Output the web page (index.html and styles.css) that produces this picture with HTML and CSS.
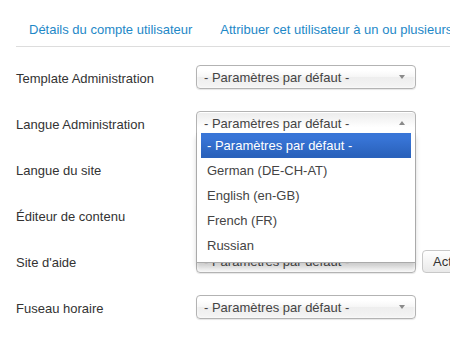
FILE: index.html
```html
<!DOCTYPE html>
<html lang="fr">
<head>
<meta charset="utf-8">
<title>Utilisateur</title>
<link rel="stylesheet" href="styles.css">
</head>
<body>
<div class="page">
  <ul class="tabs">
    <li><a href="#">Détails du compte utilisateur</a></li>
    <li><a href="#">Attribuer cet utilisateur à un ou plusieurs groupes</a></li>
  </ul>
  <form class="form">
    <div class="row">
      <label class="label">Template Administration</label>
      <div class="controls">
        <div class="select"><span class="value">- Paramètres par défaut -</span><b class="arrow"></b></div>
      </div>
    </div>
    <div class="row row-open">
      <label class="label">Langue Administration</label>
      <div class="controls">
        <div class="select open"><span class="value">- Paramètres par défaut -</span><b class="arrow up"></b>
          <div class="drop">
            <ul class="results">
              <li class="hl">- Paramètres par défaut -</li>
              <li>German (DE-CH-AT)</li>
              <li>English (en-GB)</li>
              <li>French (FR)</li>
              <li>Russian</li>
            </ul>
          </div>
        </div>
      </div>
    </div>
    <div class="row">
      <label class="label">Langue du site</label>
      <div class="controls">
        <div class="select"><span class="value">- Paramètres par défaut -</span><b class="arrow"></b></div>
      </div>
    </div>
    <div class="row">
      <label class="label">Éditeur de contenu</label>
      <div class="controls">
        <div class="select"><span class="value">- Paramètres par défaut -</span><b class="arrow"></b></div>
      </div>
    </div>
    <div class="row">
      <label class="label">Site d'aide</label>
      <div class="controls">
        <div class="select"><span class="value">- Paramètres par défaut -</span><b class="arrow"></b></div>
        <button type="button" class="btn">Actualiser</button>
      </div>
    </div>
    <div class="row">
      <label class="label">Fuseau horaire</label>
      <div class="controls">
        <div class="select"><span class="value">- Paramètres par défaut -</span><b class="arrow"></b></div>
      </div>
    </div>
  </form>
</div>
</body>
</html>
```

FILE: styles.css
```css
html, body {
  margin: 0;
  padding: 0;
  background: #fff;
}
body {
  width: 450px;
  height: 350px;
  overflow: hidden;
  font-family: "Liberation Sans", Arial, sans-serif;
  font-size: 13px;
  color: #333;
}
.page {
  padding: 11px 0 0 16px;
  width: 700px;
}
.tabs {
  list-style: none;
  margin: 0;
  padding: 0;
  display: flex;
  border-bottom: 1px solid #dddddd;
  white-space: nowrap;
}
.tabs li {
  margin-right: 2px;
}
.tabs a {
  display: block;
  padding: 9px 13px 6px;
  line-height: 20px;
  color: #1e88c7;
  text-decoration: none;
}
.form {
  margin-top: 18px;
}
.row {
  display: flex;
  height: 24px;
  margin-bottom: 22px;
  white-space: nowrap;
}
.label {
  width: 180px;
  flex: none;
  padding-top: 5px;
  line-height: 18px;
  color: #333;
}
.controls {
  display: flex;
  align-items: flex-start;
}
.select {
  position: relative;
  box-sizing: border-box;
  width: 220px;
  height: 24px;
  padding-left: 7px;
  border: 1px solid #b3b3b3;
  border-radius: 4px;
  background: linear-gradient(#ffffff 20%, #f6f6f6 50%, #eeeeee 52%, #f4f4f4 100%);
  box-shadow: 0 0 3px #fff inset, 0 1px 1px rgba(0, 0, 0, 0.1);
  color: #444;
  line-height: 23px;
}
.select .value {
  display: block;
  overflow: hidden;
}
.arrow {
  position: absolute;
  right: 10px;
  top: 9px;
  width: 0;
  height: 0;
  border-left: 3px solid transparent;
  border-right: 3px solid transparent;
  border-top: 4px solid #8a8a8a;
}
.arrow.up {
  border-top: 0;
  border-bottom: 4px solid #8a8a8a;
}
.select.open {
  border-bottom-left-radius: 0;
  border-bottom-right-radius: 0;
  background: linear-gradient(#eeeeee 10%, #ffffff 70%);
  box-shadow: 0 1px 0 #fff inset;
  z-index: 20;
}
.drop {
  position: absolute;
  top: 100%;
  left: -1px;
  right: -1px;
  margin-top: -1px;
  border: 1px solid #aaaaaa;
  border-top: 0;
  background: #fff;
  box-shadow: 0 4px 5px rgba(0, 0, 0, 0.15);
}
.results {
  list-style: none;
  margin: 0 4px 4px 0;
  padding: 0 0 0 4px;
}
.results li {
  padding: 5px 6px;
  line-height: 15px;
  color: #444;
}
.results li.hl {
  color: #fff;
  background: linear-gradient(#3875d7 20%, #2a62bc 90%);
}
.btn {
  margin: 1px 0 0 6px;
  height: 23px;
  padding: 0 10px;
  font-family: inherit;
  font-size: 13px;
  color: #333;
  border: 1px solid #c8c8c8;
  border-radius: 4px;
  background: linear-gradient(#ffffff, #e9e9e9);
}
```
